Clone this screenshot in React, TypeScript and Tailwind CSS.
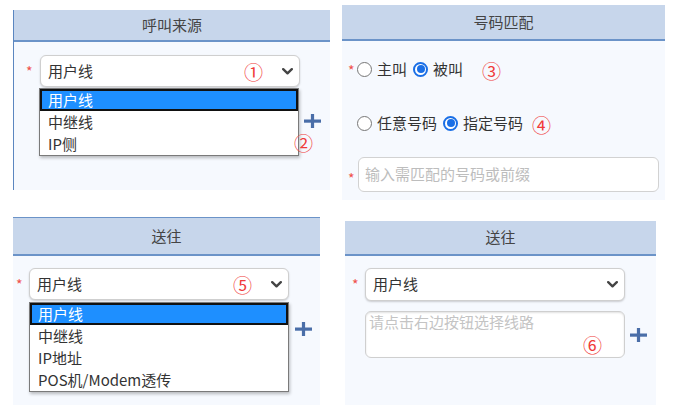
import React from "react";

const font = { fontFamily: '"Noto Sans CJK SC", "Noto Sans", sans-serif' };

function Star({ className = "" }: { className?: string }) {
  return <span className={`text-[#f0504a] text-[14px] leading-none ${className}`}>*</span>;
}

function Chevron() {
  return (
    <svg width="11" height="7" viewBox="0 0 11 7" className="shrink-0">
      <path d="M1.2 1.2 L5.5 5.3 L9.8 1.2" fill="none" stroke="#444" strokeWidth="2.4" strokeLinecap="round" strokeLinejoin="round" />
    </svg>
  );
}

function Plus() {
  return (
    <svg width="17" height="14" viewBox="0 0 17 14">
      <rect x="0" y="5.5" width="17" height="3.2" fill="#4a6ea8" />
      <rect x="6.9" y="0" width="3.2" height="14" fill="#4a6ea8" />
    </svg>
  );
}

function Num({ n, className = "" }: { n: string; className?: string }) {
  return <span className={`text-[#f03a3a] text-[19px] leading-none ${className}`}>{n}</span>;
}

function Select({ num }: { num?: string }) {
  return (
    <div className="w-[260px] h-[32px] rounded-[6px] border border-[#cfcfcf] bg-white shadow-[0_1px_2px_rgba(0,0,0,0.18)] flex items-center pl-[7px] pr-[6px]">
      <span className="text-[15px] text-[#333] flex-1">用户线</span>
      {num && <Num n={num} className="mr-[19px]" />}
      <Chevron />
    </div>
  );
}

function Dropdown({ items }: { items: string[] }) {
  return (
    <div className="w-[260px] bg-white border border-[#7a7a7a] shadow-[1px_2px_3px_rgba(0,0,0,0.25)]">
      {items.map((it, i) =>
        i === 0 ? (
          <div key={it} className="h-[22px] bg-[#1e8fff] border-2 border-[#111] text-white text-[15px] leading-[18px] pl-[6px]">
            {it}
          </div>
        ) : (
          <div key={it} className="h-[22px] text-[#333] text-[15px] leading-[22px] pl-[8px]">
            {it}
          </div>
        )
      )}
    </div>
  );
}

function Radio({ checked }: { checked?: boolean }) {
  return checked ? (
    <span className="w-[15px] h-[15px] rounded-full border-[2px] border-[#1a6fe6] bg-white flex items-center justify-center shrink-0">
      <span className="w-[8px] h-[8px] rounded-full bg-[#1a6fe6]" />
    </span>
  ) : (
    <span className="w-[15px] h-[15px] rounded-full border border-[#777] bg-white shrink-0" />
  );
}

export default function App() {
  return (
    <div style={font} className="w-[676px] h-[405px] bg-white overflow-hidden flex flex-col">
      {/* Row 1 */}
      <div className="flex items-start h-[200px]">
        {/* Panel 1 */}
        <div className="ml-[13px] mt-[10px] w-[317px] h-[180px] border-l border-[#5b86c0] bg-[#f6f9fe] flex flex-col">
          <div className="h-[32px] bg-[#c7d6eb] border-b-[2px] border-[#6b93c8] flex items-center justify-center text-[15px] text-[#444]">
            呼叫来源
          </div>
          <div className="relative pt-[13px] pl-[12px] flex items-start">
            <Star className="mt-[9px] w-[14px]" />
            <Select num="①" />
            <div className="absolute left-[25px] top-[46px]">
              <Dropdown items={["用户线", "中继线", "IP侧"]} />
            </div>
            <div className="absolute left-[290px] top-[72px]">
              <Plus />
            </div>
            <div className="absolute left-[280px] top-[90px]">
              <Num n="②" />
            </div>
          </div>
        </div>

        {/* Panel 2 */}
        <div className="ml-[12px] mt-[5px] w-[323px] h-[195px] bg-[#f6f9fe] flex flex-col">
          <div className="h-[36px] bg-[#c7d6eb] border-b-[2px] border-[#6b93c8] flex items-center justify-center text-[15px] text-[#444]">
            号码匹配
          </div>
          <div className="pl-[6px] flex flex-col">
            <div className="mt-[16px] h-[24px] flex items-center text-[15px] text-[#333]">
              <Star className="w-[9px] mt-[2px]" />
              <Radio />
              <span className="ml-[5px]">主叫</span>
              <span className="ml-[6px]"><Radio checked /></span>
              <span className="ml-[5px]">被叫</span>
              <Num n="③" className="ml-[19px] mt-[3px]" />
            </div>
            <div className="mt-[30px] h-[24px] flex items-center text-[15px] text-[#333] pl-[9px]">
              <Radio />
              <span className="ml-[5px]">任意号码</span>
              <span className="ml-[6px]"><Radio checked /></span>
              <span className="ml-[5px]">指定号码</span>
              <Num n="④" className="ml-[9px] mt-[3px]" />
            </div>
            <div className="mt-[22px] flex items-center">
              <Star className="w-[10px] mt-[6px]" />
              <div className="w-[301px] h-[35px] rounded-[6px] border border-[#d2d2d2] bg-white flex items-center pl-[6px] text-[15px] text-[#bdbdbd]">
                输入需匹配的号码或前缀
              </div>
            </div>
          </div>
        </div>
      </div>

      {/* Row 2 */}
      <div className="flex items-start">
        {/* Panel 3 */}
        <div className="ml-[13px] mt-[17px] w-[307px] h-[188px] bg-[#f6f9fe] border-t border-[#6b93c8] flex flex-col">
          <div className="h-[38px] bg-[#c7d6eb] border-b-[2px] border-[#6b93c8] flex items-center justify-center text-[15px] text-[#444]">
            送往
          </div>
          <div className="relative pt-[12px] pl-[3px] flex items-start">
            <Star className="mt-[9px] w-[13px]" />
            <Select num="⑤" />
            <div className="absolute left-[16px] top-[46px]">
              <Dropdown items={["用户线", "中继线", "IP地址", "POS机/Modem透传"]} />
            </div>
            <div className="absolute left-[282px] top-[66px]">
              <Plus />
            </div>
          </div>
        </div>

        {/* Panel 4 */}
        <div className="ml-[25px] mt-[21px] w-[311px] h-[184px] bg-[#f6f9fe] flex flex-col">
          <div className="h-[35px] bg-[#c7d6eb] border-b-[2px] border-[#6b93c8] flex items-center justify-center text-[15px] text-[#444]">
            送往
          </div>
          <div className="pt-[12px] pl-[7px] flex flex-col">
            <div className="flex items-start">
              <Star className="mt-[9px] w-[13px]" />
              <div className="w-[260px] h-[33px] rounded-[6px] border border-[#cfcfcf] bg-white shadow-[0_1px_2px_rgba(0,0,0,0.18)] flex items-center pl-[7px] pr-[6px]">
                <span className="text-[15px] text-[#333] flex-1">用户线</span>
                <Chevron />
              </div>
            </div>
            <div className="mt-[10px] ml-[13px] flex items-center">
              <div className="relative w-[260px] h-[47px] rounded-[6px] border border-[#cfcfcf] bg-white shadow-[inset_0_1px_2px_rgba(0,0,0,0.12)] pl-[3px] text-[15px] text-[#c4c4c4] leading-[20px]">
                请点击右边按钮选择线路
                <Num n="⑥" className="absolute left-[217px] top-[23px]" />
              </div>
              <div className="ml-[5px]">
                <Plus />
              </div>
            </div>
          </div>
        </div>
      </div>
    </div>
  );
}
